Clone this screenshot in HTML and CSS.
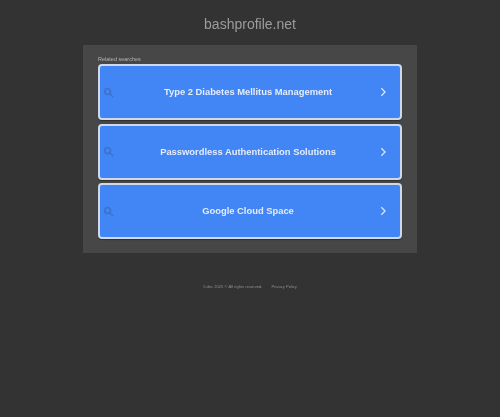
FILE: index.html
```html
<!DOCTYPE html>
<html lang="en">
<head>
<meta charset="utf-8">
<title>bashprofile.net</title>
<link rel="stylesheet" href="styles.css">
</head>
<body>
<h1 class="domain">bashprofile.net</h1>
<main class="panel">
  <p class="related">Related searches</p>
  <a class="result" href="#">
    <svg class="search" viewBox="0 0 12 12"><circle cx="5" cy="5" r="3.2"/><path d="M7.5 7.5 11 11"/></svg>
    <span class="label">Type 2 Diabetes Mellitus Management</span>
    <svg class="chevron" viewBox="0 0 8 12"><path d="M2 1.5 6.5 6 2 10.500"/></svg>
  </a>
  <a class="result" href="#">
    <svg class="search" viewBox="0 0 12 12"><circle cx="5" cy="5" r="3.2"/><path d="M7.5 7.5 11 11"/></svg>
    <span class="label">Passwordless Authentication Solutions</span>
    <svg class="chevron" viewBox="0 0 8 12"><path d="M2 1.5 6.5 6 2 10.500"/></svg>
  </a>
  <a class="result" href="#">
    <svg class="search" viewBox="0 0 12 12"><circle cx="5" cy="5" r="3.2"/><path d="M7.5 7.5 11 11"/></svg>
    <span class="label">Google Cloud Space</span>
    <svg class="chevron" viewBox="0 0 8 12"><path d="M2 1.5 6.5 6 2 10.500"/></svg>
  </a>
</main>
<footer class="footer"><span>5 dec 2025 © All rights reserved.</span><a href="#">Privacy Policy</a></footer>
</body>
</html>
```
FILE: styles.css
```css
* { box-sizing: border-box; }
html, body { height: 100%; }
body {
  margin: 0;
  background: #333333;
  font-family: "Liberation Sans", Arial, sans-serif;
  overflow: hidden;
}
.domain {
  margin: 0;
  height: 45px;
  padding-top: 15px;
  text-align: center;
  font-size: 14px;
  line-height: 18px;
  font-weight: 400;
  color: #9c9c9c;
  filter: blur(0.5px);
}
.panel {
  width: 334px;
  height: 208px;
  margin: 0 auto;
  padding: 10px 15px 0;
  background: #474747;
  display: flex;
  flex-direction: column;
  gap: 3.5px;
}
.related {
  margin: 0 0 -2px;
  height: 7.500px;
  font-size: 5.500px;
  line-height: 8px;
  color: #b5b5b5;
  filter: blur(0.4px);
}
.result {
  height: 56px;
  display: flex;
  align-items: center;
  padding: 0 13px 0 3px;
  background: #4285f4;
  border: 2px solid #cfd9e9;
  border-radius: 4px;
  box-shadow: 0 1px 1px #2f2f2f;
  text-decoration: none;
  filter: blur(0.3px);
}
.search {
  width: 11px;
  height: 11px;
  flex: none;
  fill: none;
  stroke: #3a70cc;
  stroke-width: 1.500;
}
.label {
  flex: 1;
  margin-left: 3px;
  margin-bottom: 1px;
  text-align: center;
  font-size: 9.400px;
  font-weight: 700;
  color: #e4ecfb;
  filter: blur(0.2px);
}
.chevron {
  width: 8px;
  height: 10px;
  flex: none;
  fill: none;
  stroke: #dce7fa;
  stroke-width: 1.500;
}
.footer {
  margin-top: 31px;
  display: flex;
  justify-content: center;
  gap: 9px;
  font-size: 4.100px;
  line-height: 6px;
  color: #8f8f8f;
  filter: blur(0.4px);
}
.footer a { color: inherit; text-decoration: none; }
```
